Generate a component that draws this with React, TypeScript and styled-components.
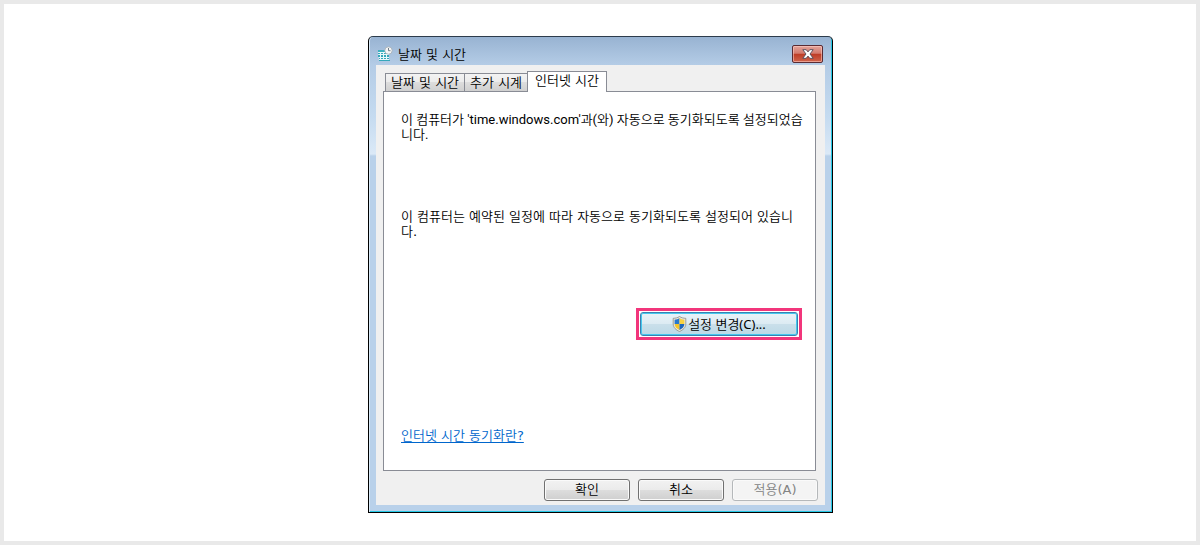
import React, { useState } from 'react';
import styled, { createGlobalStyle, css } from 'styled-components';

const korean = '"Noto Sans CJK KR DemiLight", "Noto Sans CJK KR", sans-serif';

const GlobalStyle = createGlobalStyle`
  *, *::before, *::after { box-sizing: border-box; }
  body {
    margin: 0;
    background: #fff;
    color: #000;
    font-family: "DejaVu Sans", ${korean};
    font-size: 13px;
    line-height: 15px;
  }
  button { font: inherit; color: inherit; }
`;

const Page = styled.main`
  display: flex;
  justify-content: center;
  align-items: flex-start;
  min-height: 100vh;
  padding: 32px 0 28px 1px;
  border: 4px solid #e9e9e9;
`;

const Dialog = styled.section`
  display: flex;
  flex-direction: column;
  width: 100%;
  max-width: 465px;
  padding: 0 6px 6px;
  border: 1px solid #000;
  border-top-color: #2d3c4c;
  border-radius: 5px 5px 0 0;
  background: linear-gradient(#98b3d2 0, #b4cce6 28px, #c5dbf0 80px, #dbe9f7 117px, #b9d1ea 119px);
  box-shadow: inset 1px 0 #d9eaf8, inset -1px -1px #25c8e6;
`;

const TitleBar = styled.header`
  display: flex;
  align-items: center;
  height: 28px;
  padding: 6px 3px 0 2px;
`;

const Title = styled.h1`
  flex: 1;
  margin: 0 0 0 5px;
  font-size: 13px;
  font-weight: inherit;
`;

const CloseButton = styled.button`
  display: grid;
  place-items: center;
  width: 31px;
  height: 18px;
  padding: 0;
  border: 1px solid #592b33;
  border-radius: 2px;
  background: linear-gradient(#e3a49b 0, #d3796c 46%, #bd3b25 50%, #d0644c 100%);
  box-shadow: inset 0 0 0 1px rgba(255, 210, 200, 0.55);
`;

const Client = styled.div`
  margin: 0 1px 1px;
  padding: 6px 7px 4px;
  background: #f0f0f0;
`;

const Tabs = styled.div`
  display: flex;
  align-items: flex-end;
  height: 20px;
  padding-left: 2px;
`;

const Tab = styled.button<{ $active: boolean }>`
  height: 18px;
  padding: 0 5px;
  border: 1px solid #898c95;
  border-bottom: 0;
  background: linear-gradient(#f3f3f3 0, #ebebeb 50%, #dddddd 50%, #d0d0d0 100%);
  white-space: nowrap;

  & + & { margin-left: -1px; }

  ${({ $active }) => $active && css`
    z-index: 1;
    height: 21px;
    margin-bottom: -1px;
    padding: 0 7px 4px;
    background: #fff;
  `}
`;

const Panel = styled.div`
  display: flex;
  flex-direction: column;
  align-items: flex-start;
  margin-right: 2px;
  padding: 20px 10px 27px 17px;
  border: 1px solid #898c95;
  background: #fff;
`;

const Message = styled.p<{ $latin?: boolean }>`
  min-height: 97px;
  margin: 0;
  ${({ $latin }) => $latin && css`
    font-family: Roboto, ${korean};
  `}
`;

const Highlight = styled.div`
  align-self: flex-end;
  margin: 2px 3px 88px 0;
  padding: 1px;
  border: 3px solid #f2357b;
  background: #fff;
`;

const ChangeButton = styled.button`
  display: flex;
  align-items: center;
  justify-content: center;
  gap: 1px;
  width: 158px;
  height: 24px;
  padding: 0;
  border: 1px solid #3c7fb1;
  border-radius: 3px;
  background: linear-gradient(#eaf3f8 0, #dcebf3 48%, #c9dfea 52%, #bcd9e7 100%);
  box-shadow: inset 0 0 0 1px #45c8ee;
  font-family: "Noto Sans", ${korean};
`;

const HelpLink = styled.a`
  color: #0066cc;
  text-underline-offset: 2px;
`;

const Actions = styled.footer`
  display: flex;
  justify-content: flex-end;
  gap: 8px;
  padding-top: 8px;
`;

const ActionButton = styled.button`
  width: 86px;
  height: 22px;
  padding: 0 0 2px;
  border: 1px solid #707070;
  border-radius: 3px;
  background: linear-gradient(#f2f2f2 0, #ebebeb 48%, #dddddd 52%, #cfcfcf 100%);
  box-shadow: inset 0 0 0 1px #fafafa;

  &:disabled {
    border-color: #b5b8ba;
    background: #f4f4f4;
    color: #838383;
  }
`;

const ClockIcon = () => (
  <svg width="16" height="16" viewBox="0 0 16 16" aria-hidden="true">
    <path d="M1 5h11v9H2z" fill="#e9f8fa" />
    <path d="M1 4h9v2H1z" fill="#3fb0c0" />
    <path
      d="M1 7h2v1H1zM4 7h2v1H4zM7 7h2v1H7zM1 9h2v2H1zM4 9h2v2H4zM7 9h2v2H7zM10 9h2v2h-2zM2 12h1v1H2zM4 12h2v1H4zM7 12h2v1H7zM10 12h2v1h-2zM2 14h11v1H2z"
      fill="#35a8ba"
    />
    <circle cx="11.5" cy="4.500" r="3.700" fill="#f4f6f7" stroke="#a2abb3" strokeWidth="0.8" />
    <path d="M11.500 2v2.700h2" fill="none" stroke="#61717d" strokeWidth="0.9" />
  </svg>
);

const CloseIcon = () => (
  <svg width="12" height="10" viewBox="0 0 12 10" aria-hidden="true">
    <path
      d="M.8 .7h3.400L6 2.900 7.800 .7h3.400L8 5l3.200 4.300H7.800L6 7.100 4.200 9.300H.8L4 5z"
      fill="#fff"
      stroke="#504b59"
      strokeWidth="0.9"
    />
  </svg>
);

const ShieldIcon = () => (
  <svg width="15" height="16" viewBox="0 0 15 16" aria-hidden="true">
    <path d="M7.500 .5C9.500 1.800 11.500 2.300 13.800 2.300V8c0 3.500-2.800 6-6.300 7.500C4 14 1.200 11.500 1.200 8V2.300C3.500 2.300 5.500 1.800 7.500 .5z" fill="#e9e6dc" stroke="#8c8b86" strokeWidth="0.8" />
    <path d="M7.500 2v6H2.600V3.700C4.500 3.600 6 3 7.500 2z" fill="#2878cf" />
    <path d="M7.500 2v6h4.900V3.700C10.500 3.600 9 3 7.500 2z" fill="#f8d240" />
    <path d="M2.600 8h4.900v6C4.600 12.500 2.600 10.500 2.600 8z" fill="#f5c52b" />
    <path d="M12.400 8H7.500v6c2.900-1.500 4.900-3.500 4.900-6z" fill="#1d67bd" />
  </svg>
);

const tabs = ['날짜 및 시간', '추가 시계', '인터넷 시간'];

export default function App() {
  const [active, setActive] = useState(2);

  return (
    <>
      <GlobalStyle />
      <Page>
        <Dialog role="dialog" aria-labelledby="dialog-title">
          <TitleBar>
            <ClockIcon />
            <Title id="dialog-title">날짜 및 시간</Title>
            <CloseButton type="button" aria-label="닫기"><CloseIcon /></CloseButton>
          </TitleBar>
          <Client>
            <Tabs role="tablist">
              {tabs.map((label, index) => (
                <Tab
                  key={label}
                  type="button"
                  role="tab"
                  aria-selected={active === index}
                  $active={active === index}
                  onClick={() => setActive(index)}
                >
                  {label}
                </Tab>
              ))}
            </Tabs>
            <Panel role="tabpanel">
              <Message $latin>
                이 컴퓨터가 'time.windows.com'과(와) 자동으로 동기화되도록 설정되었습니다.
              </Message>
              <Message>이 컴퓨터는 예약된 일정에 따라 자동으로 동기화되도록 설정되어 있습니다.</Message>
              <Highlight>
                <ChangeButton type="button"><ShieldIcon />설정 변경(C)...</ChangeButton>
              </Highlight>
              <HelpLink href="#internet-time">인터넷 시간 동기화란?</HelpLink>
            </Panel>
            <Actions>
              <ActionButton type="button">확인</ActionButton>
              <ActionButton type="button">취소</ActionButton>
              <ActionButton type="button" disabled>적용(A)</ActionButton>
            </Actions>
          </Client>
        </Dialog>
      </Page>
    </>
  );
}
